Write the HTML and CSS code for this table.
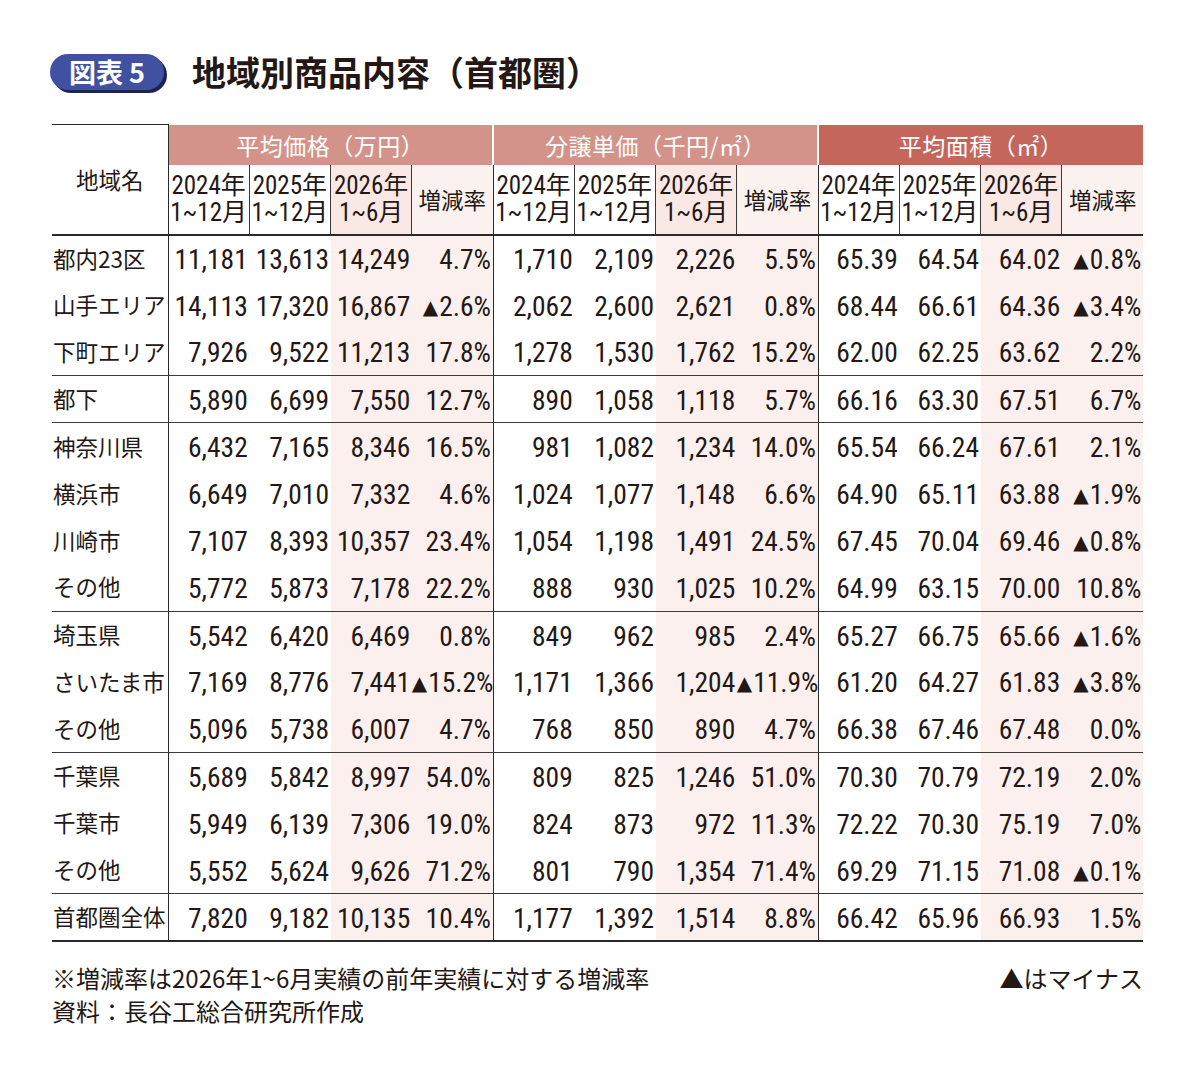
FILE: index.html
```html
<!DOCTYPE html>
<html lang="ja">
<head>
<meta charset="utf-8">
<title>図表5 地域別商品内容（首都圏）</title>
<link rel="stylesheet" href="styles.css">
</head>
<body>
<div class="page">
  <div class="title-row">
    <div class="badge">図表 5</div>
    <h1 class="title">地域別商品内容（首都圏）</h1>
  </div>

  <table class="data">
    <colgroup>
      <col class="c-region">
      <col class="c-num"><col class="c-num"><col class="c-num"><col class="c-num">
      <col class="c-num"><col class="c-num"><col class="c-num"><col class="c-num">
      <col class="c-num"><col class="c-num"><col class="c-num"><col class="c-num">
    </colgroup>
    <thead>
      <tr class="grp-row">
        <th class="region-h" rowspan="2">地域名</th>
        <th class="grp g1" colspan="4">平均価格（万円）</th>
        <th class="grp g2" colspan="4">分譲単価（千円/㎡）</th>
        <th class="grp g3" colspan="4">平均面積（㎡）</th>
      </tr>
      <tr class="sub-row">
        <th class="sub first">2024年<br>1~12月</th>
        <th class="sub">2025年<br>1~12月</th>
        <th class="sub hl">2026年<br>1~6月</th>
        <th class="sub hl rate">増減率</th>
        <th class="sub first">2024年<br>1~12月</th>
        <th class="sub">2025年<br>1~12月</th>
        <th class="sub hl">2026年<br>1~6月</th>
        <th class="sub hl rate">増減率</th>
        <th class="sub first">2024年<br>1~12月</th>
        <th class="sub">2025年<br>1~12月</th>
        <th class="sub hl">2026年<br>1~6月</th>
        <th class="sub hl rate">増減率</th>
      </tr>
    </thead>
    <tbody>
      <tr>
        <td class="name">都内23区</td>
        <td class="first">11,181</td><td>13,613</td><td class="hl">14,249</td><td class="hl">4.7%</td>
        <td class="first">1,710</td><td>2,109</td><td class="hl">2,226</td><td class="hl">5.5%</td>
        <td class="first">65.39</td><td>64.54</td><td class="hl">64.02</td><td class="hl"><span class="tri">▲</span>0.8%</td>
      </tr>
      <tr>
        <td class="name">山手エリア</td>
        <td class="first">14,113</td><td>17,320</td><td class="hl">16,867</td><td class="hl"><span class="tri">▲</span>2.6%</td>
        <td class="first">2,062</td><td>2,600</td><td class="hl">2,621</td><td class="hl">0.8%</td>
        <td class="first">68.44</td><td>66.61</td><td class="hl">64.36</td><td class="hl"><span class="tri">▲</span>3.4%</td>
      </tr>
      <tr class="sep">
        <td class="name">下町エリア</td>
        <td class="first">7,926</td><td>9,522</td><td class="hl">11,213</td><td class="hl">17.8%</td>
        <td class="first">1,278</td><td>1,530</td><td class="hl">1,762</td><td class="hl">15.2%</td>
        <td class="first">62.00</td><td>62.25</td><td class="hl">63.62</td><td class="hl">2.2%</td>
      </tr>
      <tr class="sep">
        <td class="name">都下</td>
        <td class="first">5,890</td><td>6,699</td><td class="hl">7,550</td><td class="hl">12.7%</td>
        <td class="first">890</td><td>1,058</td><td class="hl">1,118</td><td class="hl">5.7%</td>
        <td class="first">66.16</td><td>63.30</td><td class="hl">67.51</td><td class="hl">6.7%</td>
      </tr>
      <tr>
        <td class="name">神奈川県</td>
        <td class="first">6,432</td><td>7,165</td><td class="hl">8,346</td><td class="hl">16.5%</td>
        <td class="first">981</td><td>1,082</td><td class="hl">1,234</td><td class="hl">14.0%</td>
        <td class="first">65.54</td><td>66.24</td><td class="hl">67.61</td><td class="hl">2.1%</td>
      </tr>
      <tr>
        <td class="name">横浜市</td>
        <td class="first">6,649</td><td>7,010</td><td class="hl">7,332</td><td class="hl">4.6%</td>
        <td class="first">1,024</td><td>1,077</td><td class="hl">1,148</td><td class="hl">6.6%</td>
        <td class="first">64.90</td><td>65.11</td><td class="hl">63.88</td><td class="hl"><span class="tri">▲</span>1.9%</td>
      </tr>
      <tr>
        <td class="name">川崎市</td>
        <td class="first">7,107</td><td>8,393</td><td class="hl">10,357</td><td class="hl">23.4%</td>
        <td class="first">1,054</td><td>1,198</td><td class="hl">1,491</td><td class="hl">24.5%</td>
        <td class="first">67.45</td><td>70.04</td><td class="hl">69.46</td><td class="hl"><span class="tri">▲</span>0.8%</td>
      </tr>
      <tr class="sep">
        <td class="name">その他</td>
        <td class="first">5,772</td><td>5,873</td><td class="hl">7,178</td><td class="hl">22.2%</td>
        <td class="first">888</td><td>930</td><td class="hl">1,025</td><td class="hl">10.2%</td>
        <td class="first">64.99</td><td>63.15</td><td class="hl">70.00</td><td class="hl">10.8%</td>
      </tr>
      <tr>
        <td class="name">埼玉県</td>
        <td class="first">5,542</td><td>6,420</td><td class="hl">6,469</td><td class="hl">0.8%</td>
        <td class="first">849</td><td>962</td><td class="hl">985</td><td class="hl">2.4%</td>
        <td class="first">65.27</td><td>66.75</td><td class="hl">65.66</td><td class="hl"><span class="tri">▲</span>1.6%</td>
      </tr>
      <tr>
        <td class="name">さいたま市</td>
        <td class="first">7,169</td><td>8,776</td><td class="hl">7,441</td><td class="hl"><span class="tri">▲</span>15.2%</td>
        <td class="first">1,171</td><td>1,366</td><td class="hl">1,204</td><td class="hl"><span class="tri">▲</span>11.9%</td>
        <td class="first">61.20</td><td>64.27</td><td class="hl">61.83</td><td class="hl"><span class="tri">▲</span>3.8%</td>
      </tr>
      <tr class="sep">
        <td class="name">その他</td>
        <td class="first">5,096</td><td>5,738</td><td class="hl">6,007</td><td class="hl">4.7%</td>
        <td class="first">768</td><td>850</td><td class="hl">890</td><td class="hl">4.7%</td>
        <td class="first">66.38</td><td>67.46</td><td class="hl">67.48</td><td class="hl">0.0%</td>
      </tr>
      <tr>
        <td class="name">千葉県</td>
        <td class="first">5,689</td><td>5,842</td><td class="hl">8,997</td><td class="hl">54.0%</td>
        <td class="first">809</td><td>825</td><td class="hl">1,246</td><td class="hl">51.0%</td>
        <td class="first">70.30</td><td>70.79</td><td class="hl">72.19</td><td class="hl">2.0%</td>
      </tr>
      <tr>
        <td class="name">千葉市</td>
        <td class="first">5,949</td><td>6,139</td><td class="hl">7,306</td><td class="hl">19.0%</td>
        <td class="first">824</td><td>873</td><td class="hl">972</td><td class="hl">11.3%</td>
        <td class="first">72.22</td><td>70.30</td><td class="hl">75.19</td><td class="hl">7.0%</td>
      </tr>
      <tr class="sep">
        <td class="name">その他</td>
        <td class="first">5,552</td><td>5,624</td><td class="hl">9,626</td><td class="hl">71.2%</td>
        <td class="first">801</td><td>790</td><td class="hl">1,354</td><td class="hl">71.4%</td>
        <td class="first">69.29</td><td>71.15</td><td class="hl">71.08</td><td class="hl"><span class="tri">▲</span>0.1%</td>
      </tr>
      <tr class="total">
        <td class="name">首都圏全体</td>
        <td class="first">7,820</td><td>9,182</td><td class="hl">10,135</td><td class="hl">10.4%</td>
        <td class="first">1,177</td><td>1,392</td><td class="hl">1,514</td><td class="hl">8.8%</td>
        <td class="first">66.42</td><td>65.96</td><td class="hl">66.93</td><td class="hl">1.5%</td>
      </tr>
    </tbody>
  </table>

  <div class="notes">
    <div class="note-line">
      <span>※増減率は2026年1~6月実績の前年実績に対する増減率</span>
      <span>▲はマイナス</span>
    </div>
    <div class="note-line">
      <span>資料：長谷工総合研究所作成</span>
    </div>
  </div>
</div>
</body>
</html>
```

FILE: styles.css
```css
body {
  margin: 0;
  background: #ffffff;
  color: #231815;
  font-family: "Noto Sans CJK JP", "Noto Sans", sans-serif;
}

.page {
  width: 1091px;
  padding: 52px 0 0 52px;
}

.title-row {
  display: flex;
  align-items: center;
  gap: 28px;
  height: 40px;
}

.badge {
  width: 114px;
  height: 36px;
  margin-left: -2px;
  border-radius: 18px;
  background: #3f51a0;
  box-shadow: 3px 3px 0 #1d2452;
  color: #ffffff;
  font-size: 27px;
  font-weight: 700;
  line-height: 36px;
  text-align: center;
}

.title {
  margin: 0;
  font-size: 34px;
  font-weight: 700;
  line-height: 40px;
  color: #231815;
}

.data {
  margin-top: 32px;
  width: 1091px;
  table-layout: fixed;
  border-collapse: collapse;
}

.c-region { width: 116px; }
.c-num { width: 81.25px; }

.data th,
.data td {
  padding: 0;
}

.region-h {
  border-top: 1px solid #2a2a2a;
  border-right: 1px solid #2a2a2a;
  border-bottom: 2px solid #2a2a2a;
  font-size: 22.5px;
  font-weight: 400;
  text-align: center;
  vertical-align: middle;
  padding-bottom: 4px;
}

.grp-row { height: 40px; }

.grp {
  color: #ffffff;
  font-size: 23px;
  font-weight: 400;
  text-align: center;
  vertical-align: middle;
  letter-spacing: 0.5px;
}

.g1, .g2 { background: #d4938a; }
.g3 { background: #c5665d; }
.g2, .g3 { border-left: 2px solid #ffffff; }

.sub-row { height: 70px; }

.sub {
  font-family: "Roboto Condensed", "Open Sans", "Noto Sans CJK JP", sans-serif;
  font-stretch: 75%;
  font-size: 25px;
  font-weight: 400;
  line-height: 27px;
  text-align: center;
  vertical-align: middle;
  white-space: nowrap;
  border-left: 1px solid #3a3a3a;
  border-bottom: 2px solid #2a2a2a;
  background: #ffffff;
  overflow: hidden;
}

.sub.hl { background: #f9e8e4; }
.sub.rate {
  background: #fbf1ee;
  font-family: "Noto Sans CJK JP", sans-serif;
  font-size: 22.5px;
}

.data tbody tr { height: 47.1px; }

.data td {
  font-family: "Roboto Condensed", "Open Sans", "Noto Sans CJK JP", sans-serif;
  font-stretch: 75%;
  font-size: 27.5px;
  line-height: 30px;
  text-align: right;
  padding: 3px 1.5px 0 0;
  vertical-align: middle;
  white-space: nowrap;
}

.data td.first,
.sub.first { border-left: 1px solid #2a2a2a; }

.data td.hl { background: #fbf0ed; }

.data td.name {
  font-family: "Noto Sans CJK JP", sans-serif;
  font-stretch: normal;
  font-size: 22.5px;
  line-height: 26px;
  text-align: left;
  padding: 0 0 2px 1px;
  border-right: 1px solid #2a2a2a;
}

.sep td { border-bottom: 1px solid #3a3a3a; }
.total td { border-bottom: 2px solid #2a2a2a; }

.tri {
  font-family: "DejaVu Sans", sans-serif;
  font-stretch: normal;
  font-size: 20px;
  vertical-align: 2px;
  margin-right: 1px;
}

.notes {
  margin-top: 19px;
  font-size: 24px;
  line-height: 33px;
}

.note-line {
  display: flex;
  justify-content: space-between;
}
```
